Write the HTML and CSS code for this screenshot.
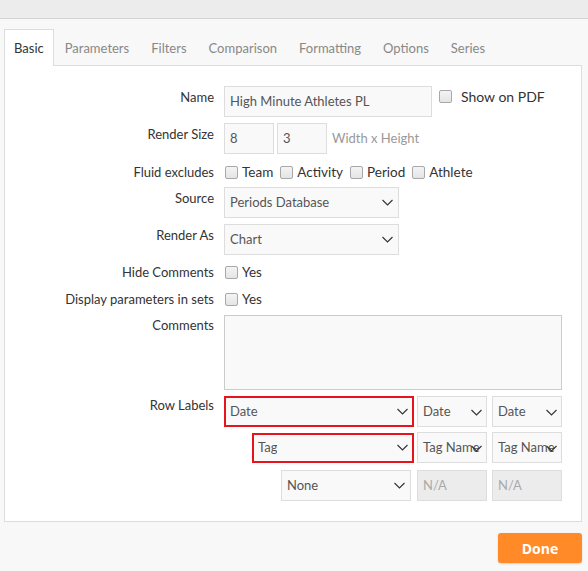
FILE: index.html
```html
<!DOCTYPE html>
<html>
<head>
<meta charset="utf-8">
<link rel="stylesheet" href="styles.css">
</head>
<body>
<div class="topbar"></div>
<div class="main">
  <div class="tabs">
    <div class="tab active">Basic</div>
    <div class="tab">Parameters</div>
    <div class="tab">Filters</div>
    <div class="tab">Comparison</div>
    <div class="tab">Formatting</div>
    <div class="tab">Options</div>
    <div class="tab">Series</div>
  </div>
  <div class="panel">
    <div class="row r-name">
      <div class="label">Name</div>
      <div class="ctrl">
        <div class="input w-name">High Minute Athletes PL</div>
        <span class="cb"></span><span class="cbtext pdf">Show on PDF</span>
      </div>
    </div>
    <div class="row r-size">
      <div class="label">Render Size</div>
      <div class="ctrl">
        <div class="input w-num">8</div>
        <div class="input w-num">3</div>
        <span class="hint">Width x Height</span>
      </div>
    </div>
    <div class="row r-check r-fluid">
      <div class="label">Fluid excludes</div>
      <div class="ctrl checks">
        <span class="cb"></span><span class="cbtext">Team</span>
        <span class="cb"></span><span class="cbtext">Activity</span>
        <span class="cb"></span><span class="cbtext">Period</span>
        <span class="cb"></span><span class="cbtext">Athlete</span>
      </div>
    </div>
    <div class="row r-src">
      <div class="label">Source</div>
      <div class="ctrl">
        <div class="select w-sel"><span>Periods Database</span><svg class="chev" viewBox="0 0 11 7"><path d="M0.5 1 5.5 6 10.5 1"/></svg></div>
      </div>
    </div>
    <div class="row r-as">
      <div class="label">Render As</div>
      <div class="ctrl">
        <div class="select w-sel"><span>Chart</span><svg class="chev" viewBox="0 0 11 7"><path d="M0.5 1 5.5 6 10.5 1"/></svg></div>
      </div>
    </div>
    <div class="row r-check r-hide">
      <div class="label">Hide Comments</div>
      <div class="ctrl checks"><span class="cb"></span><span class="cbtext">Yes</span></div>
    </div>
    <div class="row r-check r-disp">
      <div class="label">Display parameters in sets</div>
      <div class="ctrl checks"><span class="cb"></span><span class="cbtext">Yes</span></div>
    </div>
    <div class="row r-com">
      <div class="label">Comments</div>
      <div class="ctrl"><div class="textarea"></div></div>
    </div>
    <div class="row r-rl1">
      <div class="label">Row Labels</div>
      <div class="ctrl rl">
        <div class="select bad s1"><span>Date</span><svg class="chev" viewBox="0 0 11 7"><path d="M0.5 1 5.5 6 10.5 1"/></svg></div>
        <div class="select small"><span>Date</span><svg class="chev" viewBox="0 0 11 7"><path d="M0.5 1 5.5 6 10.5 1"/></svg></div>
        <div class="select small"><span>Date</span><svg class="chev" viewBox="0 0 11 7"><path d="M0.5 1 5.5 6 10.5 1"/></svg></div>
      </div>
    </div>
    <div class="row r-rl2">
      <div class="label"></div>
      <div class="ctrl rl">
        <div class="select bad s2"><span>Tag</span><svg class="chev" viewBox="0 0 11 7"><path d="M0.5 1 5.5 6 10.5 1"/></svg></div>
        <div class="select small"><span>Tag Name</span><svg class="chev" viewBox="0 0 11 7"><path d="M0.5 1 5.5 6 10.5 1"/></svg></div>
        <div class="select small"><span>Tag Name</span><svg class="chev" viewBox="0 0 11 7"><path d="M0.5 1 5.5 6 10.5 1"/></svg></div>
      </div>
    </div>
    <div class="row r-rl3">
      <div class="label"></div>
      <div class="ctrl rl">
        <div class="select s3"><span>None</span><svg class="chev" viewBox="0 0 11 7"><path d="M0.5 1 5.5 6 10.5 1"/></svg></div>
        <div class="input small disabled">N/A</div>
        <div class="input small disabled">N/A</div>
      </div>
    </div>
  </div>
  <div class="footer"><button class="done">Done</button></div>
</div>
</body>
</html>
```
FILE: styles.css
```css
* { box-sizing: border-box; }
html, body { margin: 0; padding: 0; }
body {
  width: 588px;
  height: 571px;
  background: #f8f8f8;
  font-family: "Lato", "Open Sans", sans-serif;
  font-size: 13px;
  color: #333;
  overflow: hidden;
}
.topbar {
  height: 19px;
  background: #ececec;
  border-bottom: 1px solid #d2d2d2;
}
.main { padding: 10px 6px 0 4px; }
.tabs {
  display: flex;
  height: 36px;
}
.tab {
  padding: 0 11px;
  line-height: 38px;
  color: #888;
  font-size: 13px;
}
.tab.active {
  color: #333;
  background: #fff;
  border: 1px solid #ddd;
  border-bottom: none;
  padding: 0 9px;
  line-height: 37px;
  margin-bottom: -1px;
  position: relative;
  z-index: 1;
  height: 37px;
}
.panel {
  background: #fff;
  border: 1px solid #ddd;
  padding: 20px 0 20px 0;
}
.row {
  display: flex;
  align-items: flex-start;
}
.label {
  width: 209px;
  flex: none;
  text-align: right;
  padding-top: 2px;
  line-height: 18px;
  white-space: nowrap;
}
.ctrl {
  margin-left: 10px;
  display: flex;
  align-items: center;
}
.input, .select, .textarea {
  height: 31px;
  border: 1px solid #ddd;
  background: #f9f9f9;
  color: #555;
  line-height: 29px;
  padding: 0 5px;
  white-space: nowrap;
  overflow: hidden;
}
.w-name { width: 208px; }
.w-num { width: 50px; margin-right: 3px; }
.hint { color: #999; margin-left: 2px; margin-top: -2px; }
.r-name, .r-src { margin-bottom: 6px; }
.r-size { margin-bottom: 8px; }
.r-as { margin-bottom: 7px; }
.r-check { margin-bottom: 6px; height: 21px; }
.r-fluid { margin-bottom: 4px; }
.r-check .label { padding-top: 1px; }
.r-disp { margin-bottom: 5px; }
.r-com { margin-bottom: 6px; }
.r-com .label { padding-top: 1px; }
.cb {
  display: inline-block;
  width: 13px;
  height: 13px;
  border: 1px solid #a8a8a8;
  border-radius: 2px;
  background: linear-gradient(#f4f4f4, #e4e4e4);
  margin: 0 4px 0 1px;
  flex: none;
}
.cbtext { margin-right: 6px; line-height: 21px; font-size: 13.5px; }
.r-name .cb { margin-left: 7px; margin-right: 9px; margin-top: -10px; }
.r-name .pdf { margin-top: -10px; font-size: 14px; }
.checks { height: 21px; }
.select {
  display: flex;
  align-items: center;
  justify-content: space-between;
  padding-right: 5px;
  position: relative;
}
.select span { overflow: hidden; }
.chev {
  width: 11px;
  height: 7px;
  fill: none;
  stroke: #333;
  stroke-width: 1.1;
  flex: none;
}
.w-sel { width: 175px; }
.textarea { width: 338px; height: 75px; border-color: #ccc; }
.r-rl1 { margin-bottom: 5px; }
.r-rl2 { margin-bottom: 7px; }
.r-rl1 .label { padding-top: 0; }
.bad { border: 2px solid #e8141b; padding-left: 4px; padding-right: 4px; }
.s1 { width: 190px; }
.s2 { width: 162px; margin-left: 28px; height: 30px; }
.s3 { width: 130px; margin-left: 57px; margin-right: 3px; }
.small { width: 70px; margin-left: 3px; }
.small + .small { margin-left: 5px; }
.small .chev { position: absolute; right: 4px; top: 12px; }
.small span { overflow: visible; flex: none; }
.disabled { background: #ececec; color: #aaa; }
.footer {
  display: flex;
  justify-content: flex-end;
  padding-top: 11px;
}
.done {
  width: 84px;
  height: 30px;
  border: none;
  border-radius: 3px;
  background: #ff8a27;
  color: #fff;
  font-family: "Open Sans", sans-serif;
  font-weight: bold;
  font-size: 14px;
  box-shadow: 0 1px 2px rgba(0,0,0,0.15);
}
```
